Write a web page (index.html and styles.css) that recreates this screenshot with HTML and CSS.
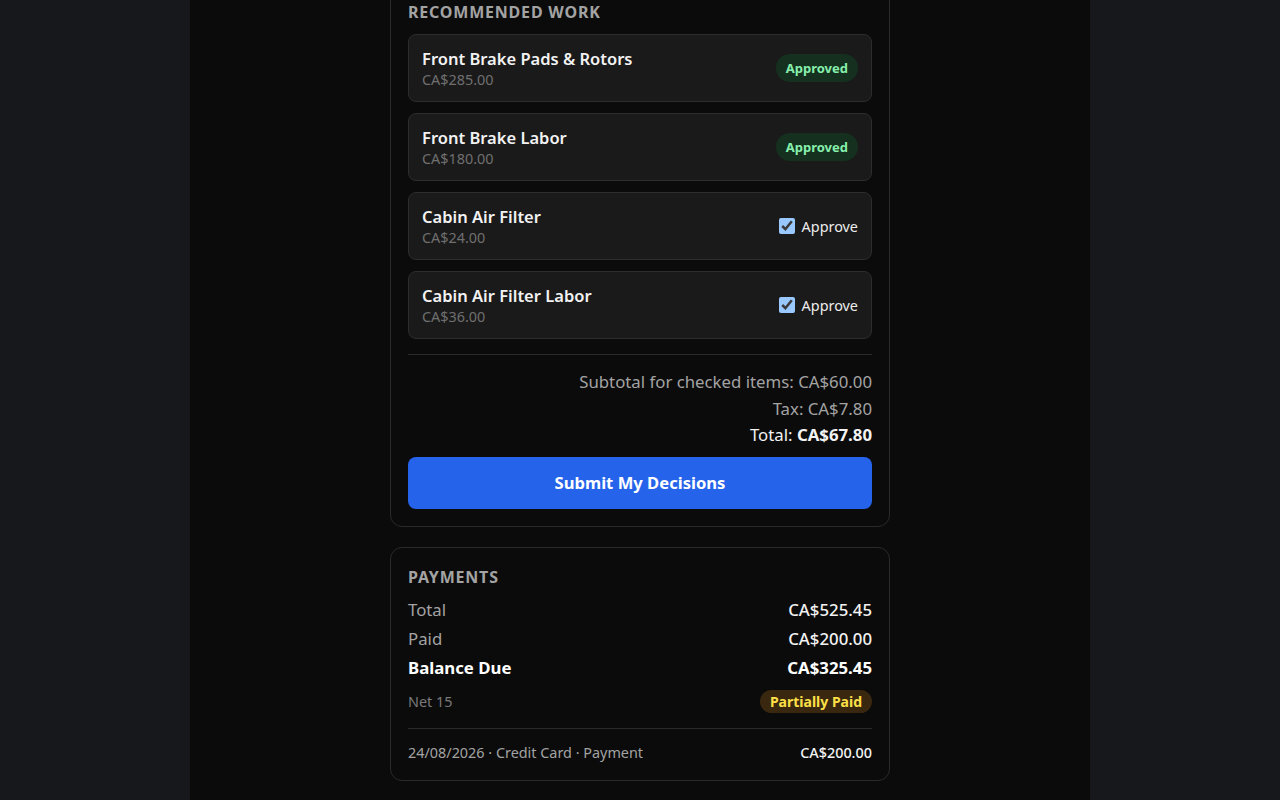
FILE: index.html
```html
<!DOCTYPE html>
<html lang="en">
<head>
<meta charset="utf-8">
<title>Estimate</title>
<link rel="stylesheet" href="styles.css">
</head>
<body>
<main class="page">
  <section class="card card-first">
    <h2 class="card-title">Recommended Work</h2>
    <ul class="items">
      <li class="item">
        <div class="item-info"><div class="item-name">Front Brake Pads &amp; Rotors</div><div class="item-price">CA$285.00</div></div>
        <span class="badge badge-approved">Approved</span>
      </li>
      <li class="item">
        <div class="item-info"><div class="item-name">Front Brake Labor</div><div class="item-price">CA$180.00</div></div>
        <span class="badge badge-approved">Approved</span>
      </li>
      <li class="item">
        <div class="item-info"><div class="item-name">Cabin Air Filter</div><div class="item-price">CA$24.00</div></div>
        <label class="approve"><input type="checkbox" checked> Approve</label>
      </li>
      <li class="item">
        <div class="item-info"><div class="item-name">Cabin Air Filter Labor</div><div class="item-price">CA$36.00</div></div>
        <label class="approve"><input type="checkbox" checked> Approve</label>
      </li>
    </ul>
    <div class="summary">
      <div class="sum-line">Subtotal for checked items: CA$60.00</div>
      <div class="sum-line">Tax: CA$7.80</div>
      <div class="sum-line sum-total">Total: <strong>CA$67.80</strong></div>
    </div>
    <button class="submit" type="button">Submit My Decisions</button>
  </section>

  <section class="card">
    <h2 class="card-title">Payments</h2>
    <div class="pay-rows">
      <div class="pay-row"><span class="pay-label">Total</span><span class="pay-value">CA$525.45</span></div>
      <div class="pay-row"><span class="pay-label">Paid</span><span class="pay-value">CA$200.00</span></div>
      <div class="pay-row pay-balance"><span class="pay-label">Balance Due</span><span class="pay-value">CA$325.45</span></div>
    </div>
    <div class="terms-row">
      <span class="terms">Net 15</span>
      <span class="badge badge-partial">Partially Paid</span>
    </div>
    <div class="history">
      <div class="history-row"><span class="history-desc">24/08/2026 · Credit Card · Payment</span><span class="history-amt">CA$200.00</span></div>
    </div>
  </section>
</main>
</body>
</html>
```

FILE: styles.css
```css
* { box-sizing: border-box; }
html, body { margin: 0; padding: 0; }
body {
  background: #17181c;
  font-family: "Noto Sans", "Open Sans", sans-serif;
  color: #f2f2f2;
  overflow: hidden;
}
.page {
  width: 900px;
  margin: 0 auto;
  min-height: 100vh;
  background: #0b0b0b;
  padding: 0 0 20px;
  display: flex;
  flex-direction: column;
  align-items: center;
  gap: 20px;
}
.card {
  width: 500px;
  border: 1px solid #2a2a2a;
  border-radius: 12px;
  background: #0b0b0b;
  padding: 18px 17px 17px;
}
.card-first { margin-top: -18px; }
.card-title {
  margin: 0;
  font-size: 16px;
  line-height: 22px;
  font-weight: 700;
  text-transform: uppercase;
  letter-spacing: 0.8px;
  color: #a3a3a3;
}
.items {
  list-style: none;
  margin: 11px 0 0;
  padding: 0;
  display: flex;
  flex-direction: column;
  gap: 11px;
}
.item {
  display: flex;
  align-items: center;
  justify-content: space-between;
  height: 68px;
  padding: 0 13px;
  background: #1a1a1a;
  border: 1px solid #2d2d2d;
  border-radius: 8px;
}
.item-info { padding-top: 2px; }
.item-name {
  font-size: 16.5px;
  line-height: 22px;
  font-weight: 600;
  color: #f2f2f2;
}
.item-price {
  font-size: 14.4px;
  line-height: 20px;
  color: #6f6f6f;
}
.badge {
  display: inline-flex;
  align-items: center;
  border-radius: 999px;
  font-weight: 700;
}
.badge-approved {
  height: 28px;
  padding: 0 10px;
  font-size: 13px;
  background: #15301f;
  color: #86efac;
}
.approve {
  display: inline-flex;
  align-items: center;
  gap: 7px;
  font-size: 14.4px;
  color: #ececec;
}
.approve input {
  color-scheme: dark;
  width: 16px;
  height: 16px;
  margin: 0;
}
.summary {
  margin-top: 15px;
  border-top: 1px solid #2a2a2a;
  padding-top: 14px;
  text-align: right;
}
.sum-line {
  font-size: 16.8px;
  line-height: 26.5px;
  color: #a3a3a3;
}
.sum-total { color: #f2f2f2; }
.sum-total strong { font-weight: 700; }
.submit {
  display: block;
  width: 100%;
  height: 52px;
  margin-top: 8px;
  border: none;
  border-radius: 8px;
  background: #2563eb;
  color: #fff;
  font-family: inherit;
  font-size: 16.6px;
  font-weight: 700;
}
.pay-rows { margin-top: 7px; }
.pay-row {
  display: flex;
  justify-content: space-between;
  font-size: 16.8px;
  line-height: 29px;
}
.pay-label { color: #a3a3a3; }
.pay-value { color: #f2f2f2; font-weight: 500; }
.pay-balance .pay-label,
.pay-balance .pay-value { color: #fff; font-weight: 700; }
.terms-row {
  display: flex;
  justify-content: space-between;
  align-items: center;
  margin-top: 8px;
}
.terms { font-size: 14.4px; color: #7a7a7a; }
.badge-partial {
  height: 23px;
  padding: 0 10px;
  font-size: 14px;
  background: #3a2710;
  color: #fde047;
}
.history {
  margin-top: 15px;
  border-top: 1px solid #2a2a2a;
  padding-top: 14px;
}
.history-row {
  display: flex;
  justify-content: space-between;
  font-size: 14.4px;
  line-height: 20px;
}
.history-desc { color: #a3a3a3; }
.history-amt { color: #f2f2f2; font-weight: 500; }
```
